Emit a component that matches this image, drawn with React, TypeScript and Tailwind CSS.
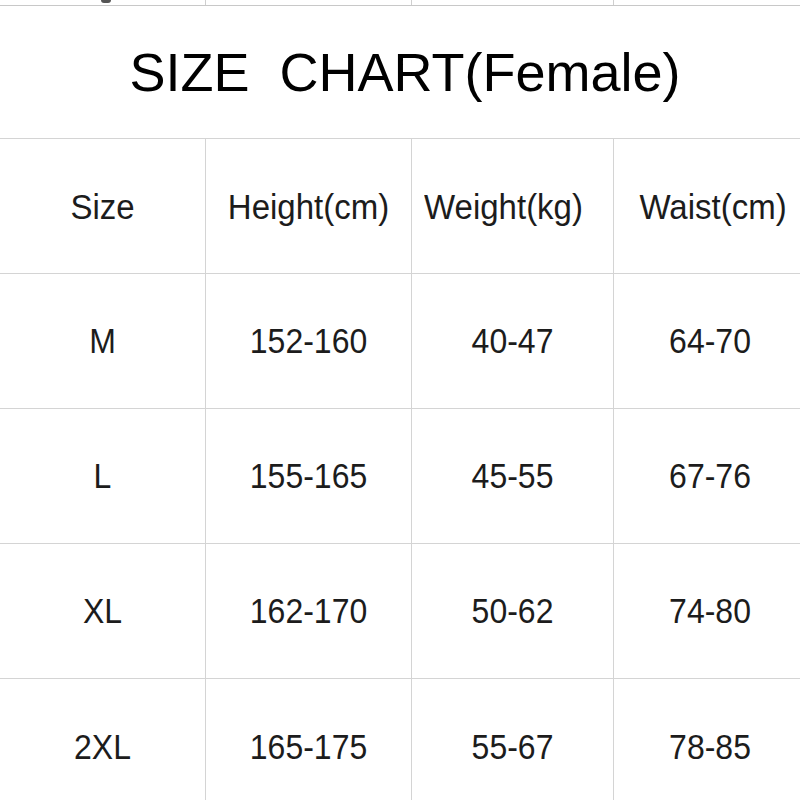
import React from "react";

const cols = "grid grid-cols-[206px_206px_202px_206px]";

const header = ["Size", "Height(cm)", "Weight(kg)", "Waist(cm)"];
const rows = [
  ["M", "152-160", "40-47", "64-70"],
  ["L", "155-165", "45-55", "67-76"],
  ["XL", "162-170", "50-62", "74-80"],
  ["2XL", "165-175", "55-67", "78-85"],
];

export default function App() {
  return (
    <div
      className="w-[800px] h-[800px] overflow-hidden bg-white text-[#1c1c1c]"
      style={{ fontFamily: '"Liberation Sans", Arial, sans-serif' }}
    >
      <div className="w-[820px]">
        <div className={`${cols} h-[6px] border-b border-[#c8c8c8] relative`}>
          <div className="border-r border-[#cfcfcf]" />
          <div className="border-r border-[#cfcfcf]" />
          <div className="border-r border-[#cfcfcf]" />
          <div />
          <div className="absolute left-[101px] top-0 w-[10px] h-[3px] rounded-b-full bg-[#555]" />
        </div>
        <div className="h-[133px] w-[800px] flex items-center justify-center border-b border-[#d4d4d4]">
          <span className="text-[54px] leading-none text-black whitespace-pre pl-[10px]">
            {"SIZE  CHART(Female)"}
          </span>
        </div>
        <div className={`${cols} h-[135px] border-b border-[#d4d4d4]`}>
          {header.map((h, i) => (
            <div
              key={h}
              className={`flex items-center justify-center text-[33px] leading-none whitespace-nowrap ${
                i < 3 ? "border-r border-[#d4d4d4]" : ""
              } ${i === 2 ? "pr-[18px]" : ""} ${i === 3 ? "pr-[8px]" : ""}`}
            >
              <span className="inline-block scale-y-[1.08]">{h}</span>
            </div>
          ))}
        </div>
        {rows.map((r, ri) => (
          <div
            key={ri}
            className={`${cols} h-[135px] ${ri < 3 ? "border-b border-[#d4d4d4]" : ""}`}
          >
            {r.map((c, i) => (
              <div
                key={i}
                className={`flex items-center justify-center text-[32px] leading-none ${
                  i < 3 ? "border-r border-[#d4d4d4]" : ""
                } ${i === 3 ? "pr-[14px]" : ""}`}
              >
                <span className="inline-block scale-y-[1.1]">{c}</span>
              </div>
            ))}
          </div>
        ))}
      </div>
    </div>
  );
}
